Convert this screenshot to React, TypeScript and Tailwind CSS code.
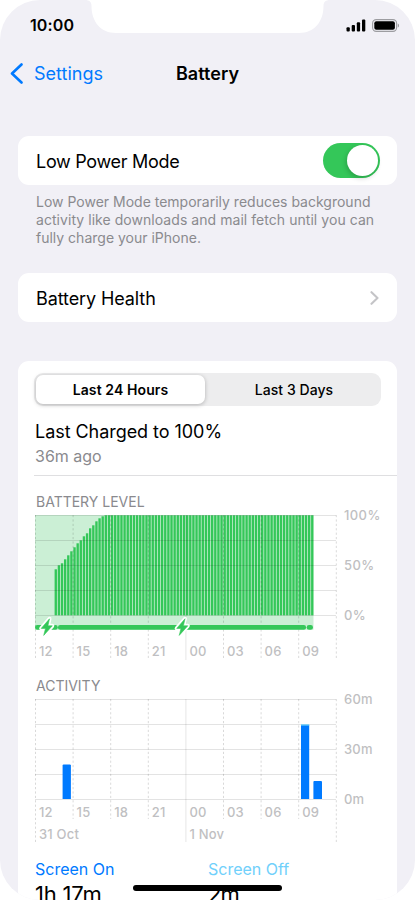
import React from 'react';
import clsx from 'clsx';

const HOURS = ['12', '15', '18', '21', '00', '03', '06', '09'];
const STEP = 37.6;

// Distance from the top of the plot for the bars recorded while charging
const CHARGING = [54, 50, 48, 44, 40, 36, 32, 28, 25, 21, 18, 13, 10, 6, 3, 1];
const BAR_COUNT = 83;

const levels = Array.from({ length: BAR_COUNT }, (_, i) => CHARGING[i] ?? 0);

const StatusBar: React.FC = () => (
  <div className="flex h-[50px] items-start justify-between pl-[30px] pr-[15px] pt-[16px]">
    <span className="text-[16px] font-semibold leading-[18px] tracking-[0.1px]">10:00</span>
    <div className="flex items-center gap-[6px] pt-[3px]">
      <svg width="20" height="13" viewBox="0 0 20 13">
        <rect x="0.5" y="8.2" width="3.3" height="4.3" rx="1" />
        <rect x="5.7" y="6" width="3.3" height="6.5" rx="1" />
        <rect x="10.8" y="3.2" width="3.3" height="9.3" rx="1" />
        <rect x="16" y="0.5" width="3.3" height="12" rx="1" />
      </svg>
      <svg width="28" height="13" viewBox="0 0 28 13">
        <rect x="0.6" y="0.6" width="24" height="11.8" rx="3.6" fill="none" stroke="#9d9da1" strokeWidth="1.1" />
        <rect x="2.3" y="2.2" width="20.6" height="8.6" rx="2" />
        <path d="M25.8 4.4c1.5.6 1.5 3.6 0 4.2z" fill="#8f8f93" />
      </svg>
    </div>
  </div>
);

const Notch: React.FC = () => (
  <svg className="absolute left-0 top-0" width="415" height="40" viewBox="0 0 415 40">
    <path
      d="M85 0c4.5 0 6.5 2 6.5 6C91.5 22 101 33 116 33H299C314 33 323.5 22 323.5 6C323.5 2 325.5 0 330 0Z"
      fill="#fff"
    />
  </svg>
);

const Grid: React.FC<{ short: number; long: number; tall: number[] }> = ({ short, long, tall }) => (
  <g stroke="#000">
    {[0, 25, 50, 75, 100].map((y) => (
      <line key={y} x1="0" x2="301" y1={y + 4.5} y2={y + 4.5} strokeOpacity="0.11" />
    ))}
    {[0, 1, 2, 3, 4, 5, 6, 7, 8].map((i) => (
      <line
        key={i}
        x1={i * STEP + 0.5}
        x2={i * STEP + 0.5}
        y1="4"
        y2={tall.includes(i) ? long : short}
        strokeDasharray={i === 4 ? undefined : '2.2 2.2'}
        strokeOpacity={i === 4 ? 0.1 : 0.15}
      />
    ))}
  </g>
);

const HourLabels: React.FC<{ y: number }> = ({ y }) => (
  <>
    {HOURS.map((hour, i) => (
      <text key={hour} x={i * STEP + 4} y={y}>
        {hour}
      </text>
    ))}
  </>
);

const BOLT = 'M8.6 0L0.3 9.6H4.6L2.8 16.6L11.4 7H7Z';

const Bolt: React.FC<{ x: number }> = ({ x }) => (
  <g transform={`translate(${x} 107.8)`} strokeLinejoin="round">
    <path d={BOLT} fill="#fff" stroke="#fff" strokeWidth="4" />
    <path d={BOLT} fill="#34c759" stroke="#34c759" strokeWidth="0.6" />
  </g>
);

const chartText = 'fill-[#bfbfc2] text-[13px] font-medium';

const BatteryChart: React.FC = () => (
  <svg className={clsx('block overflow-visible', chartText)} width="362" height="150" viewBox="0 0 362 150">
    <rect x="0" y="4" width="278.5" height="114.7" fill="#cbefd5" />
    <g fill="#34c759">
      {levels.map((top, i) => (
        <rect key={i} x={19.6 + i * 3.128} y={4.3 + top} width="2.35" height={100 - top} />
      ))}
    </g>
    <Grid short={147} long={149} tall={[4]} />
    <g stroke="#34c759" strokeWidth="4.6" strokeLinecap="round">
      <line x1="2.3" x2="20.5" y1="116.4" y2="116.4" />
      <line x1="25.2" x2="268.8" y1="116.4" y2="116.4" />
      <line x1="274" x2="275.7" y1="116.4" y2="116.4" />
    </g>
    <Bolt x={5.9} />
    <Bolt x={141.4} />
    <g className="tracking-[0.2px]">
      <HourLabels y={144.5} />
    </g>
    <g className="tracking-[0.4px]">
      <text x="309" y="9">100%</text>
      <text x="309" y="59">50%</text>
      <text x="309" y="109">0%</text>
    </g>
  </svg>
);

const ActivityChart: React.FC = () => (
  <svg className={clsx('block overflow-visible', chartText)} width="362" height="150" viewBox="0 0 362 150">
    <Grid short={124} long={147} tall={[0, 4, 8]} />
    <g fill="#007aff">
      <path d="M27.6 104V70.5a1 1 0 0 1 1-1h6.3a1 1 0 0 1 1 1V104z" />
      <path d="M266 104V30h8.2v74z" />
      <path d="M278.4 104V87a1 1 0 0 1 1-1h6.6a1 1 0 0 1 1 1V104z" />
    </g>
    <rect x="266" y="29.3" width="8.2" height="1.4" fill="#5ac8fa" />
    <g className="tracking-[0.2px]">
      <HourLabels y={122} />
      <text x="4" y="144">31 Oct</text>
      <text x="154.5" y="144">1 Nov</text>
      <text x="309" y="9">60m</text>
      <text x="309" y="59">30m</text>
      <text x="309" y="109">0m</text>
    </g>
  </svg>
);

export default function App() {
  return (
    <div className="h-[900px] w-[415px] bg-white font-['Inter',sans-serif] text-black">
      <div className="relative h-full overflow-hidden rounded-[40px] bg-[#f1f0f6]">
        <Notch />
        <StatusBar />

        <header className="grid h-[46px] grid-cols-3 items-center px-[10px]">
          <div className="flex items-center gap-[11px] text-[#007aff]">
            <svg width="13" height="21" viewBox="0 0 13 21" fill="none" stroke="currentColor" strokeWidth="2.6" strokeLinecap="round" strokeLinejoin="round">
              <path d="M11.5 1.5L2 10.5L11.5 19.5" />
            </svg>
            <span className="text-[18px]">Settings</span>
          </div>
          <h1 className="text-center text-[18px] font-semibold tracking-[0.05px]">Battery</h1>
        </header>

        <main className="px-[18px] pt-10">
          <section className="flex h-[49px] items-center justify-between rounded-[11px] bg-white pl-[18px] pr-[17px]">
            <span className="pt-px text-[18px] tracking-[-0.3px]">Low Power Mode</span>
            <div className="flex h-[35px] w-[57px] items-center justify-end rounded-full bg-[#34c759] pr-[2px]">
              <div className="size-[31px] rounded-full bg-white shadow-[-1px_2px_5px_rgba(0,0,0,0.2)]" />
            </div>
          </section>
          <p className="mt-[8px] h-[54px] whitespace-nowrap pl-[18px] text-[14px] leading-[18px] text-[#8a8a8e]">
            Low Power Mode temporarily reduces background
            <br />
            <span className="tracking-[0.05px]">activity like downloads and mail fetch until you can</span>
            <br />
            fully charge your iPhone.
          </p>

          <section className="mt-[26px] flex h-[49px] items-center justify-between rounded-[11px] bg-white px-[18px]">
            <span className="pt-px text-[18px] tracking-[-0.1px]">Battery Health</span>
            <svg width="9" height="14" viewBox="0 0 9 14" fill="none" stroke="#c4c4c7" strokeWidth="2.1" strokeLinecap="round" strokeLinejoin="round">
              <path d="M1.5 1.2L7.5 7L1.5 12.8" />
            </svg>
          </section>

          <section className="mt-[39px] h-[560px] rounded-t-[11px] bg-white pl-[16px] pt-[12px]">
            <div className="flex h-[33px] w-[347px] rounded-[9px] bg-[#ededee] p-[2px] text-[14px] leading-[29px]">
              <div className="w-[169px] rounded-[7px] bg-white text-center font-semibold tracking-[0.1px] shadow-[0_1px_4px_rgba(0,0,0,0.25)]">
                Last 24 Hours
              </div>
              <div className="flex-1 pl-[4px] text-center font-medium tracking-[0.05px]">Last 3 Days</div>
            </div>
            <div className="mt-[14px] h-[56px] border-b border-[#dfdfe1]">
              <div className="pl-px text-[18px] leading-[24px] tracking-[-0.05px]">Last Charged to 100%</div>
              <div className="mt-[1px] pl-px text-[16px] leading-[23px] text-[#8a8a8e]">36m ago</div>
            </div>

            <div className="pl-px">
              <h2 className="mt-[17px] h-[18px] pl-px text-[14px] leading-[17px] text-[#8a8a8e]">BATTERY LEVEL</h2>
              <BatteryChart />
              <h2 className="mt-[16px] h-[18px] pl-px text-[14px] leading-[17px] text-[#8a8a8e]">ACTIVITY</h2>
              <ActivityChart />
            </div>

            <div className="mt-[13px] grid grid-cols-[173px_1fr] pl-px leading-[22px]">
              <div>
                <div className="text-[16px] text-[#007aff]">Screen On</div>
                <div className="mt-px text-[22px] leading-[27px] tracking-[-0.2px]">1h 17m</div>
              </div>
              <div>
                <div className="text-[16px] text-[#70d0fb]">Screen Off</div>
                <div className="mt-px text-[22px] leading-[27px] tracking-[-0.9px]">2m</div>
              </div>
            </div>
          </section>
        </main>

        <div className="absolute bottom-[9px] left-[133px] h-[6px] w-[149px] rounded-full bg-black" />
      </div>
    </div>
  );
}
